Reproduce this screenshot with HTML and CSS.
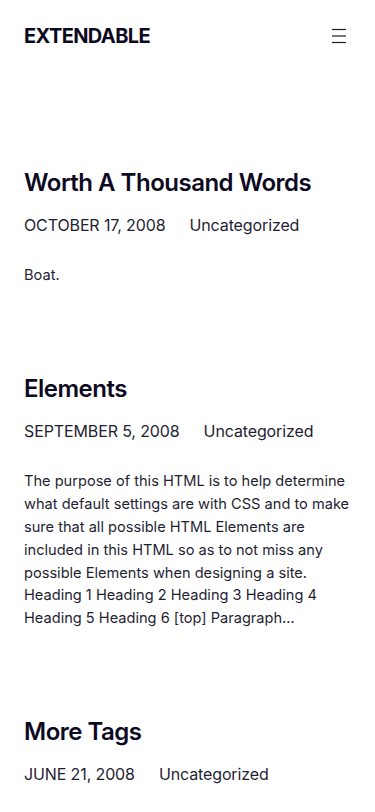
FILE: index.html
```html
<!DOCTYPE html>
<html lang="en">
<head>
<meta charset="utf-8">
<meta name="viewport" content="width=device-width, initial-scale=1">
<title>Extendable</title>
<link rel="stylesheet" href="styles.css">
</head>
<body>
<header class="site-header">
  <a class="logo" href="#">EXTENDABLE</a>
  <button class="menu-btn" aria-label="Menu">
    <svg width="24" height="24" viewBox="0 0 24 24" fill="none" stroke="#1a1a2e" stroke-width="1.2">
      <line x1="5" y1="5.5" x2="19" y2="5.5"/>
      <line x1="5" y1="12" x2="19" y2="12"/>
      <line x1="5" y1="18.5" x2="19" y2="18.5"/>
    </svg>
  </button>
</header>
<main class="posts">
  <article class="post">
    <h2 class="post-title">Worth A Thousand Words</h2>
    <div class="post-meta"><span class="date">OCTOBER 17, 2008</span><span class="cat">Uncategorized</span></div>
    <p class="excerpt">Boat.</p>
  </article>
  <article class="post">
    <h2 class="post-title">Elements</h2>
    <div class="post-meta"><span class="date">SEPTEMBER 5, 2008</span><span class="cat">Uncategorized</span></div>
    <p class="excerpt">The purpose of this HTML is to help determine what default settings are with CSS and to make sure that all possible HTML Elements are included in this HTML so as to not miss any possible Elements when designing a site. Heading 1 Heading 2 Heading 3 Heading 4 Heading 5 Heading 6 [top] Paragraph…</p>
  </article>
  <article class="post">
    <h2 class="post-title">More Tags</h2>
    <div class="post-meta"><span class="date">JUNE 21, 2008</span><span class="cat">Uncategorized</span></div>
  </article>
</main>
</body>
</html>
```
FILE: styles.css
```css
* { box-sizing: border-box; }
html, body { margin: 0; padding: 0; background: #fff; }
body {
  font-family: Inter, "Noto Sans", sans-serif;
  color: #1f1e33;
  padding: 0 24px;
}
.site-header {
  display: flex;
  justify-content: space-between;
  align-items: center;
  height: 72px;
}
.logo {
  font-size: 20px;
  font-weight: 700;
  letter-spacing: -0.6px;
  color: #0c0a22;
  text-decoration: none;
}
.menu-btn {
  background: none;
  border: 0;
  padding: 0;
  width: 24px;
  height: 24px;
  display: flex;
}
.posts {
  display: flex;
  flex-direction: column;
  padding-top: 95px;
  gap: 86px;
}
.post-title {
  margin: 0;
  font-size: 24px;
  line-height: 31.2px;
  font-weight: 600;
  letter-spacing: -0.5px;
  color: #0c0a22;
}
.post-meta {
  margin-top: 15px;
  display: flex;
  gap: 24px;
  font-size: 16px;
  line-height: 24px;
  letter-spacing: -0.12px;
}
.excerpt {
  margin: 27px 0 0;
  font-size: 14.6px;
  line-height: 22.85px;
}
```
